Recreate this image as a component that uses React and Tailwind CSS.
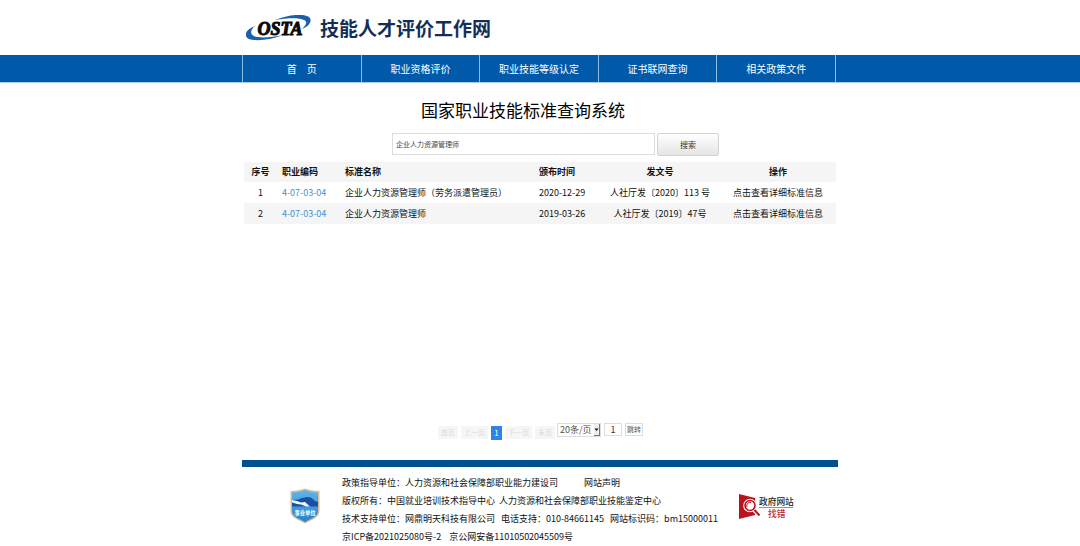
import React, { useState } from 'react'

const navItems = ['首\u3000页', '职业资格评价', '职业技能等级认定', '证书联网查询', '相关政策文件']

const rows = [
  { id: 1, code: '4-07-03-04', name: '企业人力资源管理师（劳务派遣管理员）', date: '2020-12-29', doc: '人社厅发〔2020〕113 号' },
  { id: 2, code: '4-07-03-04', name: '企业人力资源管理师', date: '2019-03-26', doc: '人社厅发〔2019〕47号' },
]

const OstaLogo = () => (
  <svg viewBox="0 0 66 26" className="w-[66px] h-[26px]" role="img" aria-label="OSTA">
    <path d="M9 11C-1 15 -3 21 3 24C11 27 27 24 37 20C26 22.5 13 23.5 8 21C4 19 4 15 9 11Z" fill="#1b5faa" />
    <path d="M29 5C41 0 57 -2 63 2C67 6 63 11 56 14C60 10 62 7 58 5C53 2.5 41 3 29 5Z" fill="#1b5faa" />
    <text
      x="34"
      y="20"
      textAnchor="middle"
      fontSize="18"
      fontWeight="bold"
      fontStyle="italic"
      fill="#080808"
      stroke="#080808"
      strokeWidth="1"
      fontFamily="'Liberation Serif', serif"
    >
      OSTA
    </text>
  </svg>
)

const Shield = () => (
  <svg viewBox="0 0 30 36" className="w-[30px] h-9" role="img" aria-label="事业单位">
    <defs>
      <linearGradient id="sky" x1="0" y1="0" x2="0" y2="1">
        <stop offset="0" stopColor="#62b5ea" />
        <stop offset="1" stopColor="#2583c9" />
      </linearGradient>
    </defs>
    <path d="M15 0.5C19 2 24 3 29.5 3V23C29.5 30 21 32 15 35.5C9 32 0.5 30 0.5 23V3C6 3 11 2 15 0.5Z" fill="#d8bd98" />
    <path d="M15 2C19 3.4 23 4.3 28 4.4V23C28 29 20 31 15 34C10 31 2 29 2 23V4.4C7 4.3 11 3.4 15 2Z" fill="url(#sky)" />
    <path d="M2 12L8 11.5L12 10L17 9L21 9.5L25 13L28 14V18.5H2Z" fill="#1b4fa3" />
    <path d="M2 12L7 13L11 14.5L15 14L20 18.5H16L11 16.5L7 16L2 14.5Z" fill="#eef7fd" />
    <text x="15" y="26.5" textAnchor="middle" fontSize="5.3" fontWeight="bold" fill="#fff" fontFamily="'Noto Sans CJK SC', sans-serif">
      事业单位
    </text>
  </svg>
)

const ErrorReport = () => (
  <svg viewBox="0 0 56 26" className="w-14 h-[26px]" role="img" aria-label="政府网站找错">
    <path d="M0 0L16 4V21L0 25Z" fill="#bd111b" />
    <path d="M14 15L21 22" stroke="#fff" strokeWidth="4" />
    <circle cx="11" cy="11.5" r="6.8" fill="#fff" />
    <circle cx="11" cy="11.5" r="5" fill="#fff" stroke="#bd111b" strokeWidth="1.6" />
    <path d="M8 13A3.3 3.3 0 0 1 12 8.5" fill="none" stroke="#bd111b" strokeWidth="1" />
    <path d="M15.5 16L20.5 21.5" stroke="#bd111b" strokeWidth="2" />
    <path d="M20 13.5H54" stroke="#c9545a" strokeWidth="0.8" />
    <g fontWeight="500" fontFamily="'Noto Sans CJK SC', sans-serif">
      <text x="20" y="10.5" fontSize="8.7" fill="#222">政府网站</text>
      <text x="29" y="23" fontSize="8.7" fill="#c5232b">找错</text>
    </g>
  </svg>
)

const PageButton = ({ children }) => (
  <button disabled className="h-[13px] px-[3px] bg-[#f6f6f6] text-[#dcdcdc] text-[7px] leading-[13px]">
    {children}
  </button>
)

const App = () => {
  const [keyword, setKeyword] = useState('企业人力资源管理师')
  const [page, setPage] = useState('1')

  return (
    <div className="bg-white text-[#111] text-[9px] font-['Noto_Sans_CJK_SC',sans-serif]">
      <header className="max-w-[596px] mx-auto h-[55px] flex items-center gap-2 pl-1">
        <OstaLogo />
        <h1 className="text-[19px] leading-6 font-bold text-[#142f57]">技能人才评价工作网</h1>
      </header>

      <nav className="bg-[#0059a9] border-b border-[#a9cdea]">
        <ul className="max-w-[596px] mx-auto flex border-l border-[#8dbbe2] pr-[2px]">
          {navItems.map((item) => (
            <li key={item} className="flex-1 border-r border-[#8dbbe2]">
              <a href="#" className="block text-center text-[10px] leading-[27px] text-white">
                {item}
              </a>
            </li>
          ))}
        </ul>
      </nav>

      <main className="max-w-[596px] mx-auto">
        <h2 className="pt-[15px] pr-[34px] text-center text-[17px] leading-6 text-black">国家职业技能标准查询系统</h2>

        <form className="mt-[11px] pl-[150px] flex gap-[2px]" onSubmit={(e) => e.preventDefault()}>
          <input
            aria-label="标准名称"
            value={keyword}
            onChange={(e) => setKeyword(e.target.value)}
            className="w-[263px] h-[22px] px-[3px] border border-[#ddd] text-[7px] text-[#444] outline-none"
          />
          <button className="w-[62px] h-[23px] border border-[#d4d4d4] rounded-xs bg-linear-to-b from-white to-[#e4e4e4] text-[8px] text-[#333]">
            搜索
          </button>
        </form>

        {/* Results */}
        <div className="min-h-[261px] mt-[6px] px-[2px]">
          <table className="w-full table-fixed text-left leading-[21px]">
            <colgroup>
              <col className="w-[33px]" />
              <col className="w-[63px]" />
              <col className="w-[194px]" />
              <col className="w-[66px]" />
              <col className="w-[120px]" />
              <col />
            </colgroup>
            <thead>
              <tr className="bg-[#f5f5f5] leading-5">
                <th className="text-center">序号</th>
                <th className="pl-[5px]">职业编码</th>
                <th className="pl-[5px]">标准名称</th>
                <th className="pl-[5px]">颁布时间</th>
                <th className="text-center">发文号</th>
                <th className="text-center">操作</th>
              </tr>
            </thead>
            <tbody>
              {rows.map((row) => (
                <tr key={row.id} className="even:bg-[#f5f5f5]">
                  <td className="text-center">{row.id}</td>
                  <td className="pl-[5px]">
                    <a href="#" className="text-[#4293d2]">{row.code}</a>
                  </td>
                  <td className="pl-[5px]">{row.name}</td>
                  <td className="pl-[5px]">{row.date}</td>
                  <td className="text-center">{row.doc}</td>
                  <td className="text-center">
                    <a href="#">点击查看详细标准信息</a>
                  </td>
                </tr>
              ))}
            </tbody>
          </table>
        </div>

        {/* Pagination */}
        <div className="flex items-start pl-[196px] gap-[2px]">
          <div className="flex gap-[3px] pt-[3px]">
            <PageButton>首页</PageButton>
            <PageButton>上一页</PageButton>
            <button className="w-[11px] h-[14px] bg-[#2a86e2] text-white text-[8px] leading-[14px]">1</button>
            <PageButton>下一页</PageButton>
            <PageButton>末页</PageButton>
          </div>
          <div className="relative">
            <select
              aria-label="每页条数"
              className="appearance-none block w-11 h-[14px] pl-[2px] border border-[#ddd] text-[9px] leading-3 text-[#555]"
            >
              <option>20条/页</option>
              <option>50条/页</option>
            </select>
            <span className="absolute right-px top-px w-[6px] h-3 border-r border-b border-[#777] bg-[#eee] pointer-events-none">
              <svg viewBox="0 0 5 11" className="w-full h-full">
                <path d="M0.5 4.5H4.5L2.5 7Z" fill="#111" />
              </svg>
            </span>
          </div>
          <input
            aria-label="页码"
            value={page}
            onChange={(e) => setPage(e.target.value)}
            className="w-[18px] h-[13px] ml-px border border-[#ddd] text-center text-[9px] text-[#333] outline-none"
          />
          <button className="w-[18px] h-[13px] ml-px border border-[#ddd] text-[7px] leading-[11px] text-[#555]">跳转</button>
        </div>
      </main>

      <footer className="max-w-[596px] mx-auto mt-5 border-t-[7px] border-[#00508f] pt-[7px] flex items-start">
        <div className="w-[100px] shrink-0 pl-12 pt-[14px]">
          <Shield />
        </div>
        <div className="flex-1 leading-[18px] whitespace-pre">
          <p>
            政策指导单位：人力资源和社会保障部职业能力建设司
            <a href="#" className="ml-[26px]">网站声明</a>
          </p>
          <p>版权所有：中国就业培训技术指导中心  人力资源和社会保障部职业技能鉴定中心</p>
          <p>
            技术支持单位：网鼎明天科技有限公司
            <span className="ml-[6px]">电话支持：010-84661145</span>
            <span className="ml-[6px]">网站标识码：bm15000011</span>
          </p>
          <p>
            京ICP备2021025080号-2
            <span className="ml-2">京公网安备11010502045509号</span>
          </p>
        </div>
        <a href="#" className="mr-[43px] mt-5">
          <ErrorReport />
        </a>
      </footer>
    </div>
  )
}

export default App
